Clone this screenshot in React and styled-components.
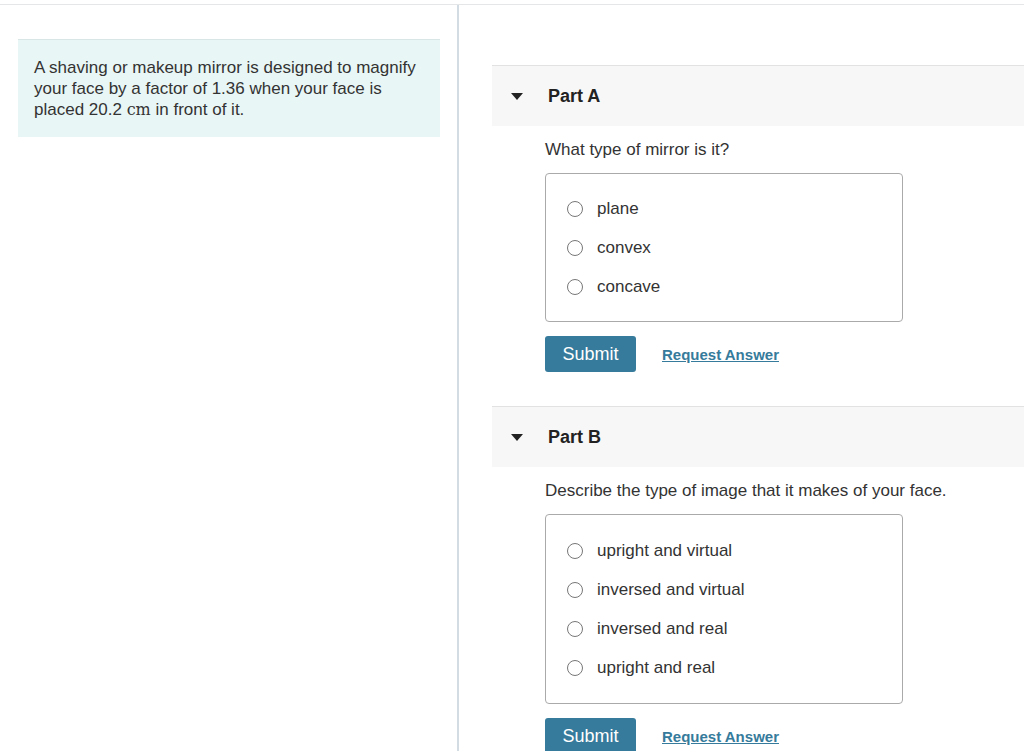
import React from "react"
import styled, { createGlobalStyle } from "styled-components"

const GlobalStyle = createGlobalStyle`
  html, body {
    margin: 0;
    padding: 0;
    background: #fff;
    overflow: hidden;
  }
  body {
    font-family: "Liberation Sans", Arial, sans-serif;
    color: #333;
  }
`

const Page = styled.div`
  height: 751px;
  display: flex;
  flex-direction: column;
  padding-top: 4px;
  box-sizing: border-box;
`

const Columns = styled.div`
  flex: 1;
  display: flex;
  border-top: 1px solid #e4e6e8;
`

const LeftColumn = styled.div`
  width: 459px;
  flex-shrink: 0;
  border-right: 2px solid #d3dbe3;
  padding: 34px 17px 0 18px;
  box-sizing: border-box;
`

const Intro = styled.div`
  background: #e9f6f6;
  border-top: 1px solid #d9e6e6;
  padding: 17px 16px 17px 16px;
  font-size: 17px;
  line-height: 21px;
  color: #333;
`

const MathUnit = styled.span`
  font-family: "DejaVu Serif", "Liberation Serif", serif;
  font-size: 16px;
`

const RightColumn = styled.div`
  flex: 1;
  padding: 60px 0 0 33px;
  display: flex;
  flex-direction: column;
`

const PartHeader = styled.div`
  display: flex;
  align-items: center;
  height: 61px;
  padding-top: 1px;
  box-sizing: border-box;
  background: #f7f7f7;
  border-top: 1px solid #e2e2e2;
  padding-left: 19px;
  font-size: 18px;
  font-weight: bold;
  color: #222;
`

const Caret = styled.span`
  width: 0;
  height: 0;
  border-left: 6px solid transparent;
  border-right: 6px solid transparent;
  border-top: 7px solid #222;
  margin-right: 25px;
`

const PartBody = styled.div`
  padding: 14px 0 0 53px;
  margin-bottom: ${p => p.$gap || 0}px;
`

const Question = styled.div`
  font-size: 17px;
  line-height: 20px;
  margin-bottom: 13px;
`

const OptionBox = styled.div`
  width: 358px;
  box-sizing: border-box;
  border: 1px solid #aaa;
  border-radius: 4px;
  padding: ${p => p.$pad}px 21px;
`

const Option = styled.label`
  display: flex;
  align-items: center;
  height: 39px;
  font-size: 17px;
  color: #333;
`

const Radio = styled.span`
  width: 16px;
  height: 16px;
  box-sizing: border-box;
  border: 1px solid #777;
  border-radius: 50%;
  background: #fff;
  margin-right: 14px;
  flex-shrink: 0;
`

const Actions = styled.div`
  display: flex;
  align-items: center;
  gap: 26px;
  margin-top: 14px;
`

const SubmitButton = styled.button`
  width: 91px;
  height: 36px;
  border: none;
  border-radius: 3px;
  background: #367b9b;
  color: #fff;
  font-family: "Liberation Sans", Arial, sans-serif;
  font-size: 18px;
  padding: 0;
`

const RequestLink = styled.a`
  font-size: 15px;
  font-weight: bold;
  color: #367b9b;
  text-decoration: underline;
`

const parts = [
  {
    name: "Part A",
    question: "What type of mirror is it?",
    options: ["plane", "convex", "concave"],
    pad: 15,
    gap: 34,
  },
  {
    name: "Part B",
    question: "Describe the type of image that it makes of your face.",
    options: ["upright and virtual", "inversed and virtual", "inversed and real", "upright and real"],
    pad: 16,
    gap: 0,
  },
]

export default function App() {
  return (
    <Page>
      <GlobalStyle />
      <Columns>
        <LeftColumn>
          <Intro>
            A shaving or makeup mirror is designed to magnify your face by a factor of 1.36 when your face is
            placed 20.2 <MathUnit>cm</MathUnit> in front of it.
          </Intro>
        </LeftColumn>
        <RightColumn>
          {parts.map(part => (
            <React.Fragment key={part.name}>
              <PartHeader>
                <Caret />
                {part.name}
              </PartHeader>
              <PartBody $gap={part.gap}>
                <Question>{part.question}</Question>
                <OptionBox $pad={part.pad}>
                  {part.options.map(opt => (
                    <Option key={opt}>
                      <Radio />
                      {opt}
                    </Option>
                  ))}
                </OptionBox>
                <Actions>
                  <SubmitButton>Submit</SubmitButton>
                  <RequestLink href="#">Request Answer</RequestLink>
                </Actions>
              </PartBody>
            </React.Fragment>
          ))}
        </RightColumn>
      </Columns>
    </Page>
  )
}
